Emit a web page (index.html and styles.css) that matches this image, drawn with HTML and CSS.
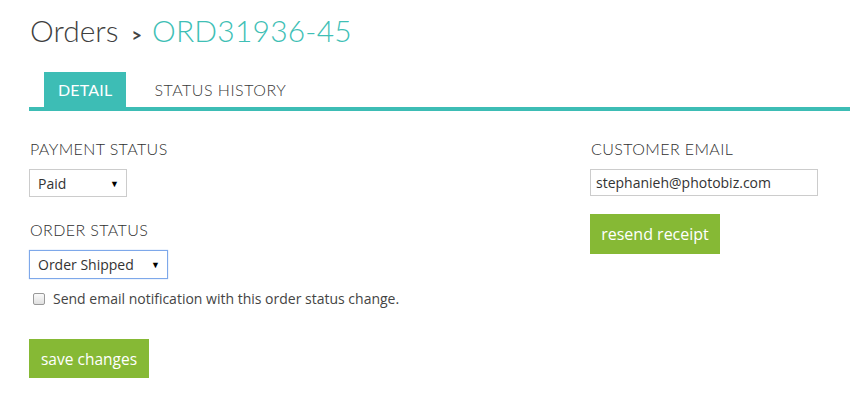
FILE: index.html
```html
<!DOCTYPE html>
<html>
<head>
<meta charset="utf-8">
<link rel="stylesheet" href="styles.css">
</head>
<body>
<div class="page">
  <h1 class="title"><span class="crumb">Orders</span><span class="sep">&gt;</span><span class="order-id">ORD31936-45</span></h1>
  <div class="tabs">
    <div class="tab active">DETAIL</div>
    <div class="tab">STATUS HISTORY</div>
  </div>
  <div class="content">
    <div class="col left">
      <div class="label">PAYMENT STATUS</div>
      <div class="select paid"><span>Paid</span><span class="arrow">&#9660;</span></div>
      <div class="label label2">ORDER STATUS</div>
      <div class="select status focused"><span>Order Shipped</span><span class="arrow">&#9660;</span></div>
      <label class="check"><span class="box"></span><span>Send email notification with this order status change.</span></label>
      <button class="btn save">save changes</button>
    </div>
    <div class="col right">
      <div class="label">CUSTOMER EMAIL</div>
      <div class="input">stephanieh@photobiz.com</div>
      <button class="btn resend">resend receipt</button>
    </div>
  </div>
</div>
</body>
</html>
```
FILE: styles.css
```css
* { box-sizing: border-box; }
body { margin: 0; background: #fff; font-family: Lato, "Open Sans", sans-serif; color: #444; }
.page { padding: 12px 0 0 29px; }
.title { margin: 0; font-weight: 300; font-size: 30px; line-height: 36px; display: flex; align-items: baseline; }
.crumb { color: #3f3f3f; padding-left: 1px; }
.sep { font-size: 18px; color: #444; margin: 0 10px 0 13px; font-weight: 700; }
.order-id { color: #3fbfb6; letter-spacing: 0.2px; }
.tabs { display: flex; margin-top: 19px; border-bottom: 4px solid #3dbdb5; padding-left: 15px; }
.tab { font-size: 16px; height: 35px; line-height: 36px; padding: 0 14px; color: #3a3a3a; font-weight: 300; letter-spacing: 0.5px; }
.tab.active { background: #3dbdb5; color: #fff; font-weight: 400; letter-spacing: 0.2px; }
.tab + .tab { margin-left: 14px; }
.content { display: flex; padding-top: 29px; }
.col.left { width: 561px; display: flex; flex-direction: column; align-items: flex-start; }
.col.right { display: flex; flex-direction: column; align-items: flex-start; }
.label { font-size: 16px; line-height: 18px; color: #2f2f2f; padding-left: 1px; font-weight: 300; letter-spacing: 0.4px; }
.label2 { margin-top: 24px; }
.select { margin-top: 11px; height: 28px; border: 1px solid #ccc; display: flex; align-items: center; justify-content: space-between; font-family: "Open Sans", sans-serif; font-size: 14px; color: #333; padding: 0 7px 0 8px; }
.select.paid { width: 98px; }
.select.status { width: 139px; height: 29px; }
.select.focused { border-color: #7ea8ea; box-shadow: 0 0 1px #9dbdf0; }
.arrow { font-size: 9px; color: #000; }
.check { display: flex; align-items: center; margin-top: 10px; font-family: "Open Sans", sans-serif; font-size: 14px; color: #444; padding-left: 4px; }
.box { width: 12px; height: 12px; border: 1px solid #999; border-radius: 2px; background: linear-gradient(#fafafa, #e0e0e0); margin-right: 8px; }
.btn { border: 0; background: #86b935; color: #fff; font-family: "Open Sans", sans-serif; font-size: 15.5px; padding: 0; height: 39px; cursor: pointer; }
.btn.save { margin-top: 31px; width: 120px; }
.btn.resend { margin-top: 18px; width: 130px; height: 40px; font-size: 16px; }
.input { margin-top: 11px; width: 228px; height: 27px; border: 1px solid #ccc; font-family: "Open Sans", sans-serif; font-size: 14px; color: #333; padding: 0 5px; line-height: 25px; }
```
